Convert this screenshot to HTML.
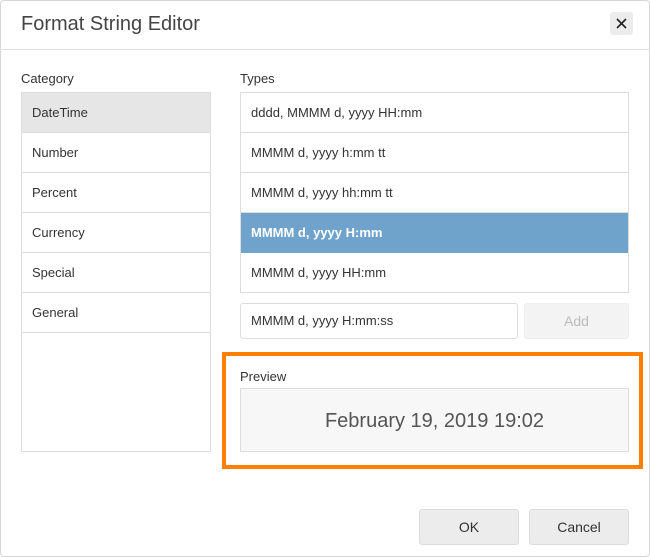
<!DOCTYPE html>
<html><head><style>
*{box-sizing:border-box;margin:0;padding:0}
body{width:650px;height:557px;background:#fff;font-family:"Liberation Sans",sans-serif;color:#333;position:relative;overflow:hidden}
.dlg{position:absolute;left:0;top:0;width:650px;height:557px;border:1px solid #d6d6d6;border-radius:4px}
.abs{position:absolute}
.title{left:21px;top:13px;font-size:20px;color:#444}
.hdr{left:0;top:49px;width:650px;height:1px;background:#e0e0e0}
.close{left:610px;top:12px;width:23px;height:23px;background:#ececec;border-radius:3px}
.lbl{font-size:13px;color:#333}
.list{border:1px solid #ddd}
.it{height:40px;line-height:40px;padding-left:10px;font-size:13px;border-bottom:1px solid #ddd}
.btn{background:#ececec;border:1px solid #ddd;border-radius:3px;text-align:center;line-height:34px;font-size:14px}
</style></head><body>
<div class="dlg"></div>
<div class="abs title">Format String Editor</div>
<div class="abs close"><svg width="23" height="23"><path d="M7 7L16 16M16 7L7 16" stroke="#222" stroke-width="1.6"/></svg></div>
<div class="abs hdr"></div>
<div class="abs lbl" style="left:21px;top:71px">Category</div>
<div class="abs list" style="left:21px;top:92px;width:190px;height:360px">
<div class="it" style="background:#e6e6e6">DateTime</div>
<div class="it">Number</div>
<div class="it">Percent</div>
<div class="it">Currency</div>
<div class="it">Special</div>
<div class="it">General</div>
</div>
<div class="abs lbl" style="left:240px;top:71px">Types</div>
<div class="abs list" style="left:240px;top:92px;width:389px;height:201px">
<div class="it">dddd, MMMM d, yyyy HH:mm</div>
<div class="it">MMMM d, yyyy h:mm tt</div>
<div class="it">MMMM d, yyyy hh:mm tt</div>
<div class="it" style="background:#6fa3cc;color:#fff;font-weight:bold;border-color:#6fa3cc">MMMM d, yyyy H:mm</div>
<div class="it" style="border-bottom:none">MMMM d, yyyy HH:mm</div>
</div>
<div class="abs" style="left:240px;top:303px;width:278px;height:36px;border:1px solid #ddd;border-radius:3px;font-size:13px;line-height:34px;padding-left:10px">MMMM d, yyyy H:mm:ss</div>
<div class="abs btn" style="left:524px;top:303px;width:105px;height:36px;background:#f3f3f3;border-color:#eee;color:#bbb">Add</div>
<div class="abs" style="left:222px;top:352px;width:421px;height:117px;border:4px solid #ff8000"></div>
<div class="abs lbl" style="left:240px;top:369px">Preview</div>
<div class="abs" style="left:240px;top:388px;width:389px;height:64px;background:#f7f7f7;border:1px solid #ddd;text-align:center;line-height:64px;font-size:20px;color:#555">February 19, 2019 19:02</div>
<div class="abs btn" style="left:419px;top:509px;width:100px;height:36px">OK</div>
<div class="abs btn" style="left:529px;top:509px;width:100px;height:36px">Cancel</div>
</body></html>
